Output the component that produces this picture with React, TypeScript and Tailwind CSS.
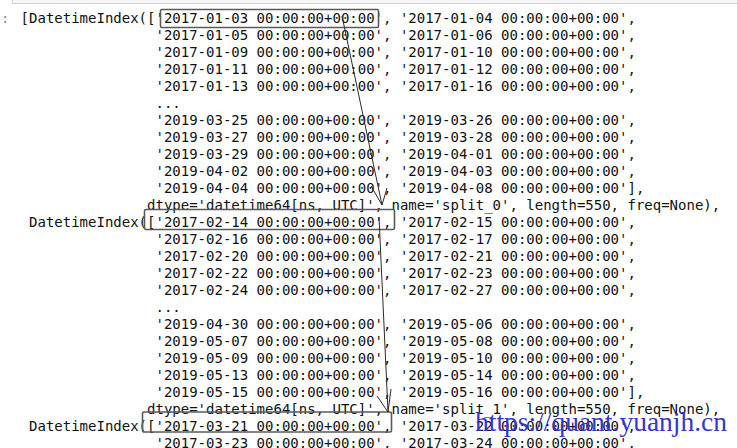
import React from "react";

const pad = (n: number) => " ".repeat(n);
const q = (d: string) => `'${d} 00:00:00+00:00'`;

const pair = (a: string, b: string, end = ",") => `${pad(16)}${q(a)}, ${q(b)}${end}`;

const lines: string[] = [
  `[DatetimeIndex([${q("2017-01-03")}, ${q("2017-01-04")},`,
  pair("2017-01-05", "2017-01-06"),
  pair("2017-01-09", "2017-01-10"),
  pair("2017-01-11", "2017-01-12"),
  pair("2017-01-13", "2017-01-16"),
  `${pad(16)}...`,
  pair("2019-03-25", "2019-03-26"),
  pair("2019-03-27", "2019-03-28"),
  pair("2019-03-29", "2019-04-01"),
  pair("2019-04-02", "2019-04-03"),
  pair("2019-04-04", "2019-04-08", "],"),
  `${pad(15)}dtype='datetime64[ns, UTC]', name='split_0', length=550, freq=None),`,
  ` DatetimeIndex([${q("2017-02-14")}, ${q("2017-02-15")},`,
  pair("2017-02-16", "2017-02-17"),
  pair("2017-02-20", "2017-02-21"),
  pair("2017-02-22", "2017-02-23"),
  pair("2017-02-24", "2017-02-27"),
  `${pad(16)}...`,
  pair("2019-04-30", "2019-05-06"),
  pair("2019-05-07", "2019-05-08"),
  pair("2019-05-09", "2019-05-10"),
  pair("2019-05-13", "2019-05-14"),
  pair("2019-05-15", "2019-05-16", "],"),
  `${pad(15)}dtype='datetime64[ns, UTC]', name='split_1', length=550, freq=None),`,
  ` DatetimeIndex([${q("2017-03-21")}, ${q("2017-03-22")},`,
  pair("2017-03-23", "2017-03-24"),
];

const Annotations = () => (
  <svg className="pointer-events-none absolute left-0 top-0" width="737" height="448" viewBox="0 0 737 448">
    <g fill="none" stroke="#5a5a5a" strokeWidth="1.6">
      <rect x="160.5" y="9.5" width="218" height="18" rx="1.5" />
      <rect x="144.5" y="209.5" width="250" height="20" rx="1.5" />
      <rect x="142.5" y="412" width="249" height="20" rx="1.5" />
    </g>
    <g fill="none" stroke="#2a2a2a" strokeWidth="1">
      <path d="M342 16 L382 205" />
      <path d="M371 186 L382 205 L387 188" />
      <path d="M379 217 L388 412" />
      <path d="M377 396 L388 412 L391 389" />
    </g>
  </svg>
);

export default function App() {
  return (
    <div className="relative h-[448px] w-[737px] overflow-hidden bg-white">
      <div className="ml-[12px] h-[4px] border-b border-l border-[#cfcfcf] bg-[#f7f7f7]" />
      <div className="flex pt-[5.5px] font-['DejaVu_Sans_Mono',monospace] text-[14px] leading-[17px]">
        <div className="w-[20.6px] shrink-0 pl-[1px] text-[#8a8a8a]">:</div>
        <pre className="m-0 font-['DejaVu_Sans_Mono',monospace] text-[14px] leading-[17px] text-[#111]">
          {lines.join("\n")}
        </pre>
      </div>
      <Annotations />
      <div className="absolute left-[475px] top-[405px] font-['Liberation_Serif',serif] text-[27.5px] leading-[34px] text-[#3535d2]">
        https://quant.yuanjh.cn
      </div>
    </div>
  );
}
